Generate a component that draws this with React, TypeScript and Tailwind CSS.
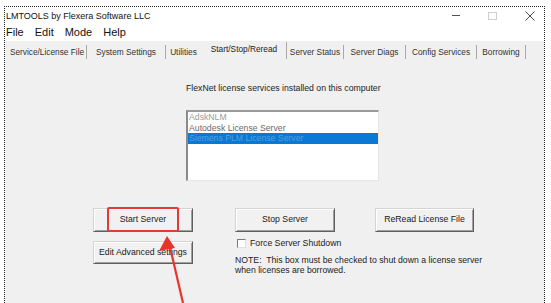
import React from "react";

const tabs: { label: string; w: string; sep: boolean; active?: boolean }[] = [
  { label: "Service/License File", w: "w-[79px]", sep: true },
  { label: "System Settings", w: "w-[79px]", sep: true },
  { label: "Utilities", w: "w-[35px]", sep: false },
  { label: "Start/Stop/Reread", w: "w-[85px]", sep: true, active: true },
  { label: "Server Status", w: "w-[57px]", sep: true },
  { label: "Server Diags", w: "w-[62px]", sep: true },
  { label: "Config Services", w: "w-[71px]", sep: true },
  { label: "Borrowing", w: "w-[49px]", sep: true },
];

function WinButton({ label, w, h }: { label: string; w: string; h: string }) {
  return (
    <div
      className={`${w} ${h} flex items-center justify-center bg-[#f1f1f1] border border-t-[#d4d4d4] border-l-[#d4d4d4] border-r-[#5f5f5f] border-b-[#5f5f5f] shadow-[inset_1px_1px_0_#ffffff,inset_-1px_-1px_0_#a0a0a0] text-[8.7px] text-[#1a1a1a]`}
    >
      {label}
    </div>
  );
}

export default function App() {
  return (
    <div className="relative w-[551px] h-[303px] overflow-hidden bg-white font-['Liberation_Sans',Arial,sans-serif]">
      <div className="ml-[4px] mt-[6px] w-[541px] h-[297px] border border-b-0 border-dotted border-[#222] flex flex-col">
        {/* title bar */}
        <div className="h-[17px] flex items-center justify-between bg-white">
          <span className="ml-[1px] pt-[1px] text-[9px] text-[#111] leading-none">LMTOOLS by Flexera Software LLC</span>
          <div className="flex items-center h-full">
            <div className="w-[8px] h-[1px] bg-[#555] mr-[28px]" />
            <div className="w-[9px] h-[8px] border border-[#cfcfcf] mr-[28px]" />
            <svg width="10" height="10" viewBox="0 0 10 10" className="mr-[9px]">
              <path d="M0.5 0.5 L9.5 9.5 M9.5 0.5 L0.5 9.5" stroke="#333" strokeWidth="0.9" fill="none" />
            </svg>
          </div>
        </div>
        {/* menu bar */}
        <div className="h-[17px] flex items-center gap-[11px] pl-[1px] bg-white text-[11px] text-[#111]">
          <span>File</span>
          <span>Edit</span>
          <span>Mode</span>
          <span>Help</span>
        </div>
        {/* tab strip */}
        <div className="h-[19px] bg-[#f0f0f0] flex items-end pl-[3px] pb-[1px]">
          {tabs.map((t) =>
            t.active ? (
              <div
                key={t.label}
                className={`${t.w} h-[17px] flex items-start justify-center pt-[3px] text-[8.3px] leading-none text-[#222] border-r border-[#a8a8a8] ml-[1px]`}
              >
                {t.label}
              </div>
            ) : (
              <div
                key={t.label}
                className={`${t.w} h-[14px] flex items-center justify-center text-[8.3px] leading-none text-[#333] ${
                  t.sep ? "border-r border-[#a8a8a8]" : ""
                }`}
              >
                {t.label}
              </div>
            )
          )}
        </div>
        {/* panel */}
        <div className="flex-1 bg-[#f0f0f0]">
          <div className="ml-[181px] mt-[23px] text-[8.7px] leading-[11px] text-[#222]">
            FlexNet license services installed on this computer
          </div>
          <div className="ml-[181px] mt-[16px] w-[193px] h-[71px] bg-white border-t-2 border-l-2 border-r border-b border-t-[#9a9a9a] border-l-[#8a8a8a] border-r-[#e6e6e6] border-b-[#e6e6e6] text-[8.7px]">
            <div className="h-[10.5px] leading-[10.5px] pl-[1px] text-[#9a9a9a]">AdskNLM</div>
            <div className="h-[10.5px] leading-[10.5px] pl-[1px] text-[#6a6a6a]">Autodesk License Server</div>
            <div className="h-[10.5px] leading-[10.5px] pl-[1px] bg-[#0a79d5] text-[#5a9fd8]">Siemens PLM License Server</div>
          </div>
          <div className="flex mt-[27px]">
            <div className="ml-[88px] flex flex-col gap-[9px]">
              <WinButton label="Start Server" w="w-[100px]" h="h-[24px]" />
              <WinButton label="Edit Advanced settings" w="w-[100px]" h="h-[23px]" />
            </div>
            <div className="ml-[42px] w-[100px] shrink-0 flex flex-col">
              <WinButton label="Stop Server" w="w-[100px]" h="h-[24px]" />
              <div className="mt-[6px] h-[10px] flex items-center whitespace-nowrap">
                <div className="ml-[2px] w-[9px] h-[9px] shrink-0 bg-white border border-t-[#7a7a7a] border-l-[#7a7a7a] border-r-[#e0e0e0] border-b-[#e0e0e0]" />
                <span className="ml-[4px] text-[8.7px] text-[#222] leading-none">Force Server Shutdown</span>
              </div>
              <div className="mt-[7px] text-[8.7px] leading-[10px] text-[#222] whitespace-nowrap">
                NOTE:&nbsp; This box must be checked to shut down a license server
                <br />
                when licenses are borrowed.
              </div>
            </div>
            <div className="ml-[40px]">
              <WinButton label="ReRead License File" w="w-[99px]" h="h-[24px]" />
            </div>
          </div>
        </div>
      </div>
      {/* red highlight annotation */}
      <div className="absolute left-[107px] top-[207px] w-[72px] h-[25px] border-2 border-[#e53935] rounded-[2px]" />
      <svg className="absolute left-0 top-0" width="551" height="303" viewBox="0 0 551 303">
        <path d="M183 303 L170 247" stroke="#e8352b" strokeWidth="2.2" fill="none" />
        <path d="M167 236 L159 251 L175 248 Z" fill="#e8352b" />
      </svg>
    </div>
  );
}
